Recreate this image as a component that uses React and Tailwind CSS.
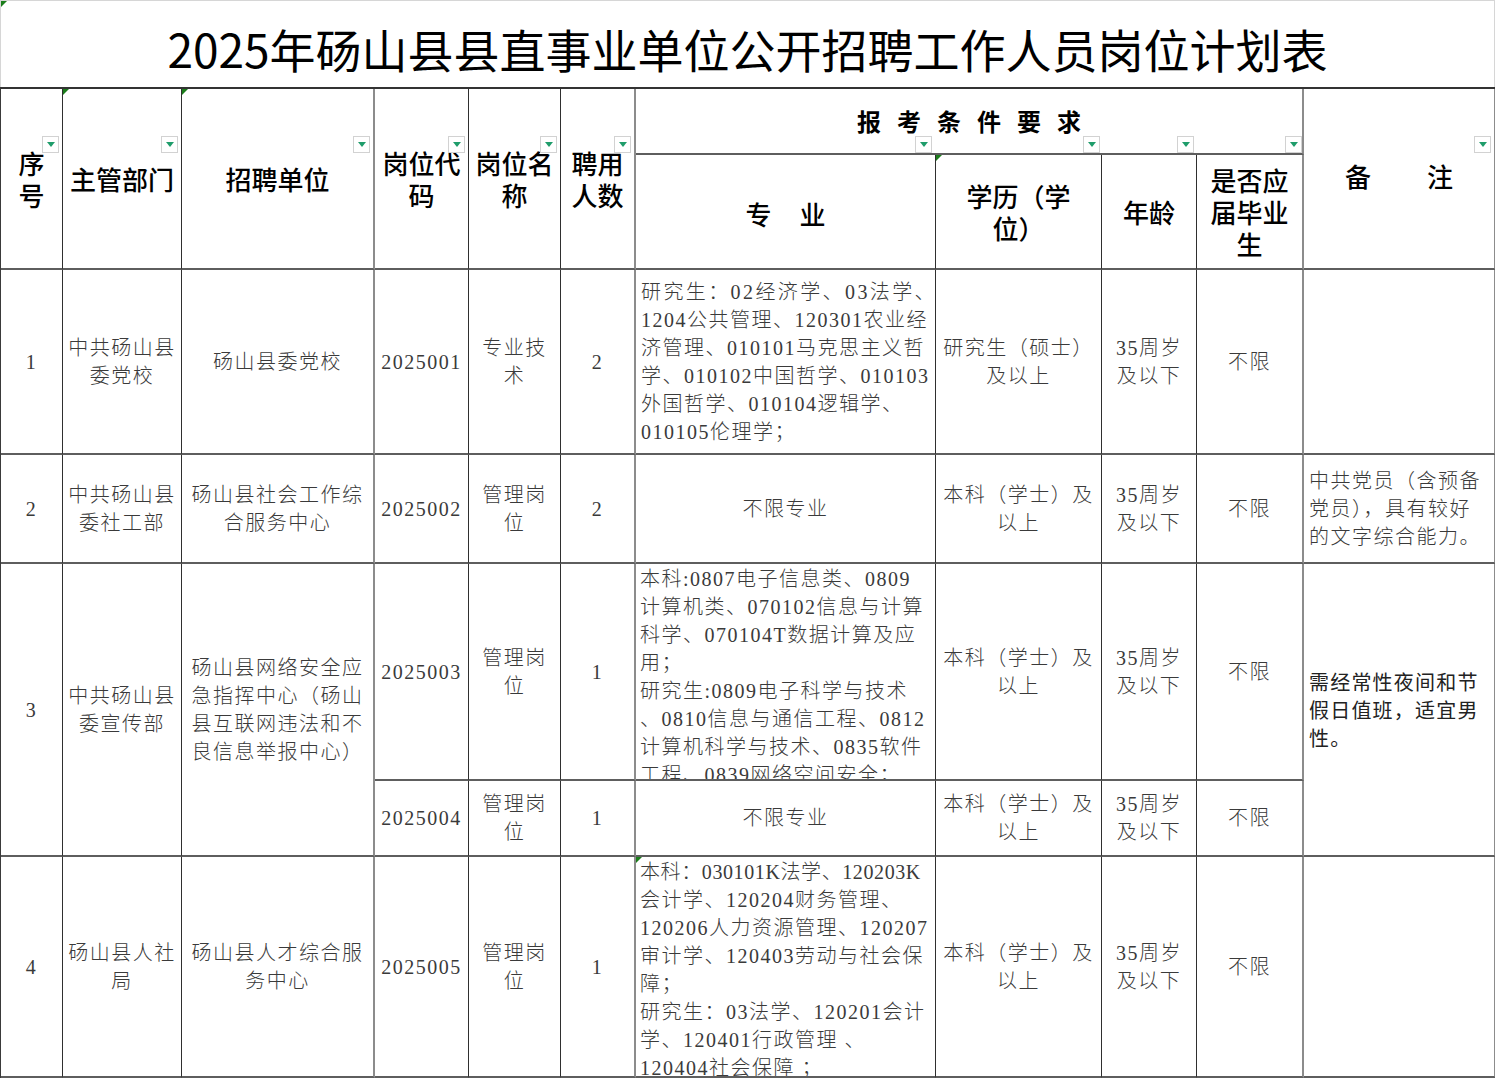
import React from "react";

const dataFont = "font-['Liberation_Serif','Noto_Sans_CJK_SC',serif]";
const headFont = "font-['Noto_Sans_CJK_SC',sans-serif]";

const FilterBtn = ({ className = "" }) => (
  <div
    className={`absolute flex h-[17px] w-[17px] items-center justify-center border border-[#d2d2d2] bg-white ${className}`}
  >
    <svg viewBox="0 0 8 6" className="h-[6px] w-[8px]">
      <polygon points="0,0 8,0 4,5" fill="#1f9d6b" />
    </svg>
  </div>
);

const Corner = () => (
  <svg viewBox="0 0 6 6" className="absolute left-0 top-0 h-[6px] w-[6px]">
    <polygon points="0,0 6,0 0,6" fill="#1b7d1b" />
  </svg>
);

const Lines = ({ items }) => (
  <div>
    {items.map((t, i) => (
      <div key={i} className="whitespace-nowrap">
        {t}
      </div>
    ))}
  </div>
);

// pos: grid placement, edge: right border style
const Cell = ({ pos, edge = "border-r border-r-[#2f2f2f]", className = "", children }) => (
  <div
    className={`relative flex overflow-hidden border-b-2 border-b-[#5e5e5e] ${edge} ${pos} ${className}`}
  >
    {children}
  </div>
);

const gray = "border-r-2 border-r-[#8c8c8c]";

const Head = ({ pos, edge, children, btn = true, corner = false }) => (
  <Cell
    pos={pos}
    edge={edge}
    className={`items-center justify-center text-center text-[26px] font-medium leading-[32px] text-black ${headFont}`}
  >
    {corner && <Corner />}
    {children}
    {btn && <FilterBtn className="right-[3px] top-[47px]" />}
  </Cell>
);

const D = ({ pos, edge, children, align = "center", corner = false }) => (
  <Cell
    pos={pos}
    edge={edge}
    className={`${
      align === "left"
        ? "items-center justify-start pl-[5px] text-left"
        : align === "top"
        ? "items-start justify-start pl-[4px] pt-[1px] text-left"
        : "items-center justify-center text-center"
    } text-[20px] font-light leading-[28px] tracking-[1.5px] text-[#3a3a3a] ${dataFont}`}
  >
    {corner && <Corner />}
    {children}
  </Cell>
);

const major1 = [
  <span className="tracking-[2.4px]">研究生：02经济学、03法学、</span>,
  "1204公共管理、120301农业经",
  "济管理、010101马克思主义哲",
  "学、010102中国哲学、010103",
  "外国哲学、010104逻辑学、",
  "010105伦理学；",
];

const major3 = [
  "本科:0807电子信息类、0809",
  "计算机类、070102信息与计算",
  "科学、070104T数据计算及应",
  "用；",
  "研究生:0809电子科学与技术",
  "、0810信息与通信工程、0812",
  "计算机科学与技术、0835软件",
  "工程、0839网络空间安全；",
];

const major4 = [
  <span className="tracking-[0.6px]">本科：030101K法学、120203K</span>,
  "会计学、120204财务管理、",
  "120206人力资源管理、120207",
  "审计学、120403劳动与社会保",
  "障；",
  "研究生：03法学、120201会计",
  "学、120401行政管理 、",
  "120404社会保障 ；",
];

const edu = ["本科（学士）及", "以上"];
const age = ["35周岁", "及以下"];
const post = ["管理岗", "位"];

export default function App() {
  return (
    <div className="min-h-screen w-[1495px] bg-white">
      <div className="relative flex h-[87px] items-center justify-center border-x border-t border-[#d6d6d6] pt-[8px]">
        <Corner />
        <h1 className={`text-[46px] font-normal leading-none text-black ${headFont}`}>
          2025年砀山县县直事业单位公开招聘工作人员岗位计划表
        </h1>
      </div>

      <div className="grid grid-cols-[62px_119px_193px_94px_92px_75px_300px_166px_95px_107px_192px] grid-rows-[66px_115px_185px_109px_217px_76px_221px] border-l border-t-2 border-l-[#3a3a3a] border-t-[#333]">
        {/* header */}
        <Head pos="col-start-1 row-start-1 row-span-2">
          <Lines items={["序", "号"]} />
        </Head>
        <Head pos="col-start-2 row-start-1 row-span-2" corner>
          主管部门
        </Head>
        <Head pos="col-start-3 row-start-1 row-span-2" edge={gray} corner>
          招聘单位
        </Head>
        <Head pos="col-start-4 row-start-1 row-span-2">
          <Lines items={["岗位代", "码"]} />
        </Head>
        <Head pos="col-start-5 row-start-1 row-span-2">
          <Lines items={["岗位名", "称"]} />
        </Head>
        <Head pos="col-start-6 row-start-1 row-span-2" edge={gray}>
          <Lines items={["聘用", "人数"]} />
        </Head>
        <Cell
          pos="col-start-7 col-span-4 row-start-1"
          edge={gray}
          className={`items-center justify-center pl-[16px] text-[24px] font-semibold tracking-[16px] text-black ${headFont}`}
        >
          报考条件要求
          <FilterBtn className="left-[279px] top-[47px]" />
          <FilterBtn className="left-[447px] top-[47px]" />
          <FilterBtn className="left-[541px] top-[47px]" />
          <FilterBtn className="left-[649px] top-[47px]" />
        </Cell>
        <Head pos="col-start-11 row-start-1 row-span-2" edge={gray}>
          <div className="flex gap-[56px] pb-[6px]">
            <span>备</span>
            <span>注</span>
          </div>
        </Head>
        <Head pos="col-start-7 row-start-2" btn={false}>
          <div className="flex gap-[28px] pt-[4px]">
            <span>专</span>
            <span>业</span>
          </div>
        </Head>
        <Head pos="col-start-8 row-start-2" btn={false} corner>
          <Lines items={["学历（学", "位）"]} />
        </Head>
        <Head pos="col-start-9 row-start-2" btn={false}>
          年龄
        </Head>
        <Head pos="col-start-10 row-start-2" edge={gray} btn={false}>
          <Lines items={["是否应", "届毕业", "生"]} />
        </Head>

        {/* row 1 */}
        <D pos="col-start-1 row-start-3">1</D>
        <D pos="col-start-2 row-start-3">
          <Lines items={["中共砀山县", "委党校"]} />
        </D>
        <D pos="col-start-3 row-start-3" edge={gray}>
          砀山县委党校
        </D>
        <D pos="col-start-4 row-start-3">2025001</D>
        <D pos="col-start-5 row-start-3">
          <Lines items={["专业技", "术"]} />
        </D>
        <D pos="col-start-6 row-start-3" edge={gray}>
          2
        </D>
        <D pos="col-start-7 row-start-3" align="left">
          <Lines items={major1} />
        </D>
        <D pos="col-start-8 row-start-3">
          <Lines items={["研究生（硕士）", "及以上"]} />
        </D>
        <D pos="col-start-9 row-start-3">
          <Lines items={age} />
        </D>
        <D pos="col-start-10 row-start-3" edge={gray}>
          不限
        </D>
        <D pos="col-start-11 row-start-3" edge={gray} />

        {/* row 2 */}
        <D pos="col-start-1 row-start-4">2</D>
        <D pos="col-start-2 row-start-4">
          <Lines items={["中共砀山县", "委社工部"]} />
        </D>
        <D pos="col-start-3 row-start-4" edge={gray}>
          <Lines items={["砀山县社会工作综", "合服务中心"]} />
        </D>
        <D pos="col-start-4 row-start-4">2025002</D>
        <D pos="col-start-5 row-start-4">
          <Lines items={post} />
        </D>
        <D pos="col-start-6 row-start-4" edge={gray}>
          2
        </D>
        <D pos="col-start-7 row-start-4">不限专业</D>
        <D pos="col-start-8 row-start-4">
          <Lines items={edu} />
        </D>
        <D pos="col-start-9 row-start-4">
          <Lines items={age} />
        </D>
        <D pos="col-start-10 row-start-4" edge={gray}>
          不限
        </D>
        <D pos="col-start-11 row-start-4" edge={gray} align="left">
          <Lines items={["中共党员（含预备", "党员），具有较好", "的文字综合能力。"]} />
        </D>

        {/* row 3 */}
        <D pos="col-start-1 row-start-5 row-span-2">3</D>
        <D pos="col-start-2 row-start-5 row-span-2">
          <Lines items={["中共砀山县", "委宣传部"]} />
        </D>
        <D pos="col-start-3 row-start-5 row-span-2" edge={gray}>
          <Lines
            items={["砀山县网络安全应", "急指挥中心（砀山", "县互联网违法和不", "良信息举报中心）"]}
          />
        </D>
        <D pos="col-start-4 row-start-5">2025003</D>
        <D pos="col-start-5 row-start-5">
          <Lines items={post} />
        </D>
        <D pos="col-start-6 row-start-5" edge={gray}>
          1
        </D>
        <D pos="col-start-7 row-start-5" align="top">
          <Lines items={major3} />
        </D>
        <D pos="col-start-8 row-start-5">
          <Lines items={edu} />
        </D>
        <D pos="col-start-9 row-start-5">
          <Lines items={age} />
        </D>
        <D pos="col-start-10 row-start-5" edge={gray}>
          不限
        </D>
        <Cell
          pos="col-start-11 row-start-5 row-span-2"
          edge={gray}
          className={`items-center pl-[5px] text-[20px] leading-[28px] tracking-[1.2px] text-[#222] ${headFont}`}
        >
          <Lines items={["需经常性夜间和节", "假日值班，适宜男", "性。"]} />
        </Cell>
        <D pos="col-start-4 row-start-6">2025004</D>
        <D pos="col-start-5 row-start-6">
          <Lines items={post} />
        </D>
        <D pos="col-start-6 row-start-6" edge={gray}>
          1
        </D>
        <D pos="col-start-7 row-start-6">不限专业</D>
        <D pos="col-start-8 row-start-6">
          <Lines items={edu} />
        </D>
        <D pos="col-start-9 row-start-6">
          <Lines items={age} />
        </D>
        <D pos="col-start-10 row-start-6" edge={gray}>
          不限
        </D>

        {/* row 4 */}
        <D pos="col-start-1 row-start-7">4</D>
        <D pos="col-start-2 row-start-7">
          <Lines items={["砀山县人社", "局"]} />
        </D>
        <D pos="col-start-3 row-start-7" edge={gray}>
          <Lines items={["砀山县人才综合服", "务中心"]} />
        </D>
        <D pos="col-start-4 row-start-7">2025005</D>
        <D pos="col-start-5 row-start-7">
          <Lines items={post} />
        </D>
        <D pos="col-start-6 row-start-7" edge={gray}>
          1
        </D>
        <D pos="col-start-7 row-start-7" align="top" corner>
          <Lines items={major4} />
        </D>
        <D pos="col-start-8 row-start-7">
          <Lines items={edu} />
        </D>
        <D pos="col-start-9 row-start-7">
          <Lines items={age} />
        </D>
        <D pos="col-start-10 row-start-7" edge={gray}>
          不限
        </D>
        <D pos="col-start-11 row-start-7" edge={gray} />
      </div>
    </div>
  );
}
